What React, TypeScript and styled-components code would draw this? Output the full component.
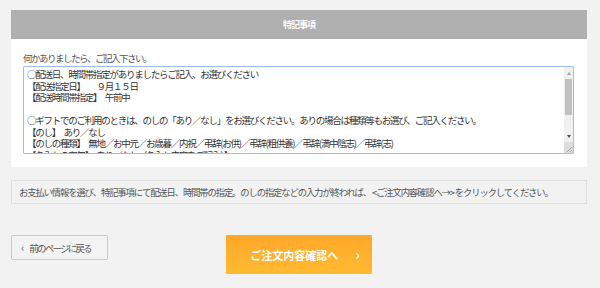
import React from "react";
import styled, { createGlobalStyle } from "styled-components";

const GlobalStyle = createGlobalStyle`
  html, body {
    margin: 0;
    padding: 0;
    background: #f2f2f2;
  }
  body {
    font-family: "Noto Sans CJK JP", "Noto Sans", sans-serif;
    color: #555;
  }
`;

const Page = styled.div`
  width: 576px;
  padding: 10px 0 0 11px;
`;

const Panel = styled.section`
  background: #fff;
`;

const PanelHeader = styled.h2`
  margin: 0;
  height: 29px;
  background: #b0b0b0;
  border-bottom: 1px solid #a9a9a9;
  box-sizing: border-box;
  display: flex;
  align-items: center;
  justify-content: center;
  color: #fff;
  font-size: 9px;
  font-weight: bold;
  letter-spacing: -1px;
`;

const PanelBody = styled.div`
  padding: 12px 12px 13px 12px;
`;

const Hint = styled.p`
  margin: 0 0 1px;
  font-size: 9.5px;
  letter-spacing: -1.5px;
  line-height: 14px;
  color: #555;
`;

const NoteBox = styled.div`
  width: 551px;
  height: 88px;
  box-sizing: border-box;
  border: 1px solid #9cbff0;
  border-radius: 1px;
  display: flex;
  background: #fff;
`;

const Note = styled.textarea`
  flex: 1;
  min-width: 0;
  margin: 0;
  padding: 2px 3px 0;
  border: none;
  outline: none;
  resize: none;
  overflow: hidden;
  font-family: "Noto Sans CJK JP", sans-serif;
  font-size: 9.5px;
  letter-spacing: -1.25px;
  line-height: 11.5px;
  color: #333;
  background: transparent;
`;

const ScrollBar = styled.div`
  width: 9px;
  display: flex;
  flex-direction: column;
  background: #f0f0f0;
`;

const ScrollButton = styled.div`
  height: 12px;
  display: flex;
  align-items: center;
  justify-content: center;
`;

const Arrow = styled.span<{ $down?: boolean }>`
  width: 0;
  height: 0;
  border-left: 2.5px solid transparent;
  border-right: 2.5px solid transparent;
  ${p =>
    p.$down
      ? "border-top: 3px solid #505050;"
      : "border-bottom: 3px solid #a3a3a3;"}
`;

const Thumb = styled.div`
  height: 36px;
  margin: 0 1px;
  background: #c1c1c1;
`;

const Track = styled.div`
  flex: 1;
`;

const Resizer = styled.div`
  height: 11px;
  background: #dcdcdc;
  display: flex;
  align-items: flex-end;
  justify-content: flex-end;
`;

const Info = styled.div`
  margin-top: 13px;
  height: 24px;
  box-sizing: border-box;
  border: 1px solid #dedede;
  padding: 0 7px;
  display: flex;
  align-items: center;
  font-size: 9.3px;
  letter-spacing: -1.1px;
  white-space: nowrap;
  color: #555;
`;

const Actions = styled.div`
  margin-top: 31px;
  display: grid;
  grid-template-columns: 1fr auto 1fr;
  align-items: start;
`;

const BackButton = styled.button`
  justify-self: start;
  width: 97px;
  height: 25px;
  box-sizing: border-box;
  border: 1px solid #c9c9c9;
  border-radius: 2px;
  background: #f3f3f3;
  color: #555;
  font-family: inherit;
  font-size: 9.5px;
  letter-spacing: -1.8px;
  padding: 0 0 0 9px;
  display: flex;
  align-items: center;
  gap: 5px;
  cursor: pointer;
`;

const Chevron = styled.span<{ $size: number }>`
  font-size: ${p => p.$size}px;
  letter-spacing: 0;
  line-height: 1;
  margin-top: -1px;
`;

const ConfirmButton = styled.button`
  width: 146px;
  height: 39px;
  border: none;
  border-radius: 1px;
  background: linear-gradient(to bottom, #ffa72a, #ffbb30);
  color: #fff;
  font-family: inherit;
  font-weight: bold;
  font-size: 11px;
  display: flex;
  align-items: center;
  justify-content: center;
  gap: 17px;
  padding: 0 0 0 12px;
  cursor: pointer;
`;

const noteText = `○配送日、時間帯指定がありましたらご記入、お選びください
【配送指定日】　　９月１５日
【配送時間帯指定】　午前中

○ギフトでのご利用のときは、のしの「あり／なし」をお選びください。ありの場合は種類等もお選び、ご記入ください。
【のし】　あり／なし
【のしの種類】　無地／お中元／お歳暮／内祝／弔辞(お供)／弔辞(粗供養)／弔辞(満中陰志)／弔辞(志)
【名入れの有無】　あり／なし（名入れ内容をご記入）】
`;

export default function App() {
  return (
    <>
      <GlobalStyle />
      <Page>
        <Panel>
          <PanelHeader>特記事項</PanelHeader>
          <PanelBody>
            <Hint>何かありましたら、ご記入下さい。</Hint>
            <NoteBox>
              <Note defaultValue={noteText} />
              <ScrollBar>
                <ScrollButton>
                  <Arrow />
                </ScrollButton>
                <Thumb />
                <Track />
                <ScrollButton>
                  <Arrow $down />
                </ScrollButton>
                <Resizer>
                  <svg width="8" height="8" viewBox="0 0 8 8">
                    <path d="M7 2 L2 7 M7 5 L5 7" stroke="#999" strokeWidth="0.8" />
                  </svg>
                </Resizer>
              </ScrollBar>
            </NoteBox>
          </PanelBody>
        </Panel>
        <Info>
          お支払い情報を選び、特記事項にて配送日、時間帯の指定。のしの指定などの入力が終われば、 &lt;ご注文内容確認へ→&gt; をクリックしてください。
        </Info>
        <Actions>
          <BackButton>
            <Chevron $size={11}>‹</Chevron>前のページに戻る
          </BackButton>
          <ConfirmButton>
            ご注文内容確認へ
            <Chevron $size={14}>›</Chevron>
          </ConfirmButton>
          <div />
        </Actions>
      </Page>
    </>
  );
}
